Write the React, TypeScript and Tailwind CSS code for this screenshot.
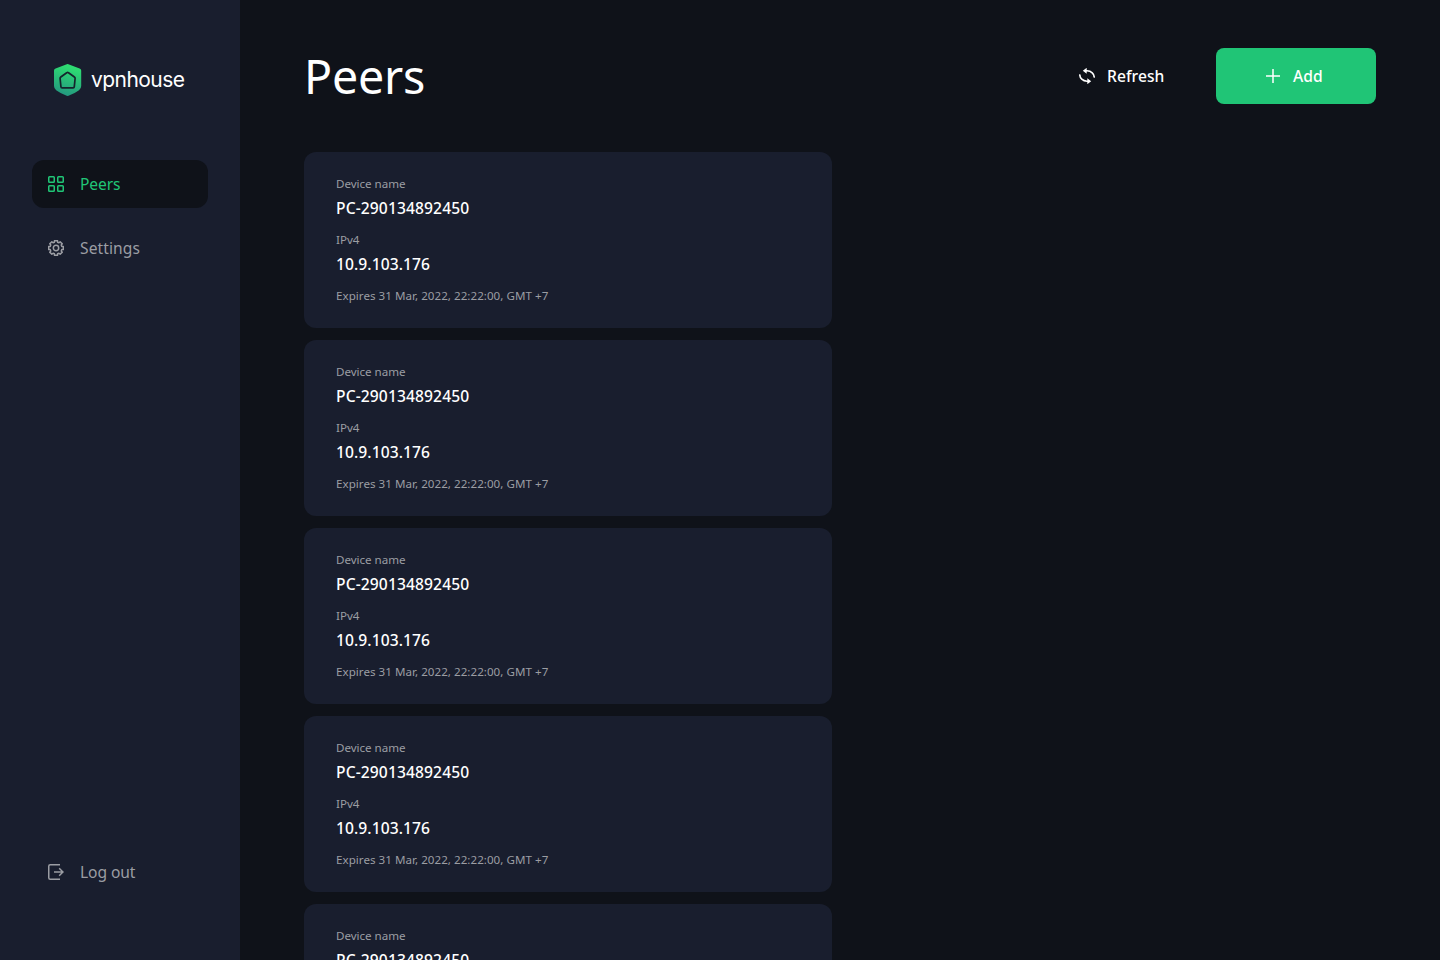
import React from "react";

const GEAR_PATH = (() => {
  const points: string[] = [];
  const steps: [number, number][] = [
    [-0.2, 7.5],
    [0.2, 7.5],
    [0.27, 6],
    [0.515, 6],
  ];
  for (let i = 0; i < 8; i++) {
    const base = (i * Math.PI) / 4 - Math.PI / 2;
    for (const [offset, radius] of steps) {
      const x = 8 + radius * Math.cos(base + offset);
      const y = 8 + radius * Math.sin(base + offset);
      points.push(`${x.toFixed(2)} ${y.toFixed(2)}`);
    }
  }
  return `M${points.join("L")}Z`;
})();

function Logo() {
  return (
    <svg width="28" height="32" viewBox="0 0 28 32" fill="none">
      <defs>
        <linearGradient id="shield" x1="17" y1="0" x2="8" y2="32" gradientUnits="userSpaceOnUse">
          <stop offset="0.1" stopColor="#2edb72" />
          <stop offset="1" stopColor="#239580" />
        </linearGradient>
      </defs>
      <path
        d="M12.8.3Q13.6-.1 14.4.3L25.6 4.4Q27.2 5 27.2 6.6V22Q27.2 24.6 25 26.2Q20.5 29.5 14.5 31.8Q13.6 32.1 12.7 31.8Q6.7 29.5 2.2 26.2Q0 24.6 0 22V6.6Q0 5 1.6 4.4Z"
        fill="url(#shield)"
      />
      <path
        d="M12.7 8.8Q13.6 8.1 14.5 8.8L20.4 13Q21.2 13.6 21.1 14.5L20.3 22.7Q20.2 23.8 19.1 23.8H8.1Q7 23.8 6.9 22.7L6.1 14.5Q6 13.6 6.8 13Z"
        stroke="#15242c"
        strokeWidth="1.7"
      />
    </svg>
  );
}

function GridIcon() {
  return (
    <svg width="16" height="16" viewBox="0 0 16 16" fill="none" stroke="currentColor" strokeWidth="1.5">
      <rect x="0.75" y="0.75" width="5.5" height="5.5" rx="0.8" />
      <rect x="9.75" y="0.75" width="5.5" height="5.5" rx="0.8" />
      <rect x="0.75" y="9.75" width="5.5" height="5.5" rx="0.8" />
      <rect x="9.75" y="9.75" width="5.5" height="5.5" rx="0.8" />
    </svg>
  );
}

function GearIcon() {
  return (
    <svg width="16" height="16" viewBox="0 0 16 16" fill="none" stroke="currentColor" strokeWidth="1.5" strokeLinejoin="round">
      <path d={GEAR_PATH} />
      <circle cx="8" cy="8" r="2.7" />
    </svg>
  );
}

function LogoutIcon() {
  return (
    <svg width="16" height="16" viewBox="0 0 16 16" fill="none" stroke="currentColor" strokeWidth="1.5">
      <path d="M12 .75H2.2Q.75.75.75 2.2V13.8Q.75 15.25 2.2 15.25H12" />
      <path d="M6 8H15M11.2 4.2L15 8L11.2 11.8" />
    </svg>
  );
}

function RefreshIcon() {
  return (
    <svg width="16" height="16" viewBox="0 0 16 16" fill="none">
      <path d="M6 2.8H8A7.2 6.4 0 0 1 15.2 9.6M10 13.2H8A7.2 6.4 0 0 1 .8 6.4" stroke="currentColor" strokeWidth="1.6" />
      <path d="M3.8 2.8L7.7-.2V5.8ZM12.2 13.2L8.3 16.2V10.2Z" fill="currentColor" />
    </svg>
  );
}

function PlusIcon() {
  return (
    <svg width="14" height="14" viewBox="0 0 14 14" stroke="currentColor" strokeWidth="1.5">
      <path d="M7 0V14M0 7H14" />
    </svg>
  );
}

function PeerCard() {
  return (
    <article className="flex h-44 w-full shrink-0 flex-col rounded-xl bg-[#191e2e] px-8 pt-6">
      <p className="h-4 text-[11.6px] leading-4 tracking-[-0.03px] text-[#9b9da3]">Device name</p>
      <p className="mt-1 h-6 text-[15.6px] leading-[25px] font-[550] tracking-[0.12px] text-white">PC-290134892450</p>
      <p className="mt-3 h-4 text-[11.6px] leading-4 text-[#9b9da3]">IPv4</p>
      <p className="mt-1 h-6 text-[15.6px] leading-[25px] font-[550] tracking-[0.08px] text-white">10.9.103.176</p>
      <p className="mt-3 h-4 text-[11.6px] leading-4 tracking-[0.03px] text-[#9b9da3]">Expires 31 Mar, 2022, 22:22:00, GMT +7</p>
    </article>
  );
}

export default function App() {
  return (
    <div className="flex h-[960px] w-[1440px] overflow-hidden bg-[#0f1219] font-['Noto_Sans',sans-serif]">
      <aside className="flex w-60 shrink-0 flex-col bg-[#191e2e] px-8 pt-16 pb-16">
        <div className="flex h-8 items-center gap-[9px] pl-[22px]">
          <Logo />
          <span className="font-[Inter,sans-serif] text-[21px] leading-8 tracking-[-0.56px] text-white">vpnhouse</span>
        </div>
        <nav className="mt-16 flex flex-1 flex-col gap-4 text-[15.6px] text-[#9b9da3]">
          <a className="flex h-12 items-center gap-4 rounded-xl bg-[#0f1219] px-4 text-[#20c576]">
            <GridIcon />
            <span className="pt-0.5 tracking-[-0.1px]">Peers</span>
          </a>
          <a className="flex h-12 items-center gap-4 px-4">
            <GearIcon />
            <span className="pt-0.5 tracking-[0.08px]">Settings</span>
          </a>
          <a className="mt-auto flex h-12 items-center gap-4 px-4">
            <LogoutIcon />
            <span className="pt-0.5 tracking-[-0.08px]">Log out</span>
          </a>
        </nav>
      </aside>
      <main className="flex min-w-0 flex-1 flex-col px-16 pt-12">
        <header className="flex h-14 shrink-0 items-center">
          <h1 className="flex-1 text-[46.5px] leading-[58px] tracking-[-0.2px] text-white">Peers</h1>
          <button className="flex h-14 w-[189px] items-center gap-3 pl-[52px] text-[15.6px] font-[550] text-white">
            <RefreshIcon />
            <span className="pt-0.5 tracking-[0.06px]">Refresh</span>
          </button>
          <button className="flex h-14 w-40 items-center gap-[13px] rounded-lg bg-[#20c576] pl-[50px] text-[15.6px] font-[550] text-white">
            <PlusIcon />
            <span className="pt-0.5">Add</span>
          </button>
        </header>
        <section className="mt-12 flex w-[528px] flex-col gap-3">
          <PeerCard />
          <PeerCard />
          <PeerCard />
          <PeerCard />
          <PeerCard />
        </section>
      </main>
    </div>
  );
}
